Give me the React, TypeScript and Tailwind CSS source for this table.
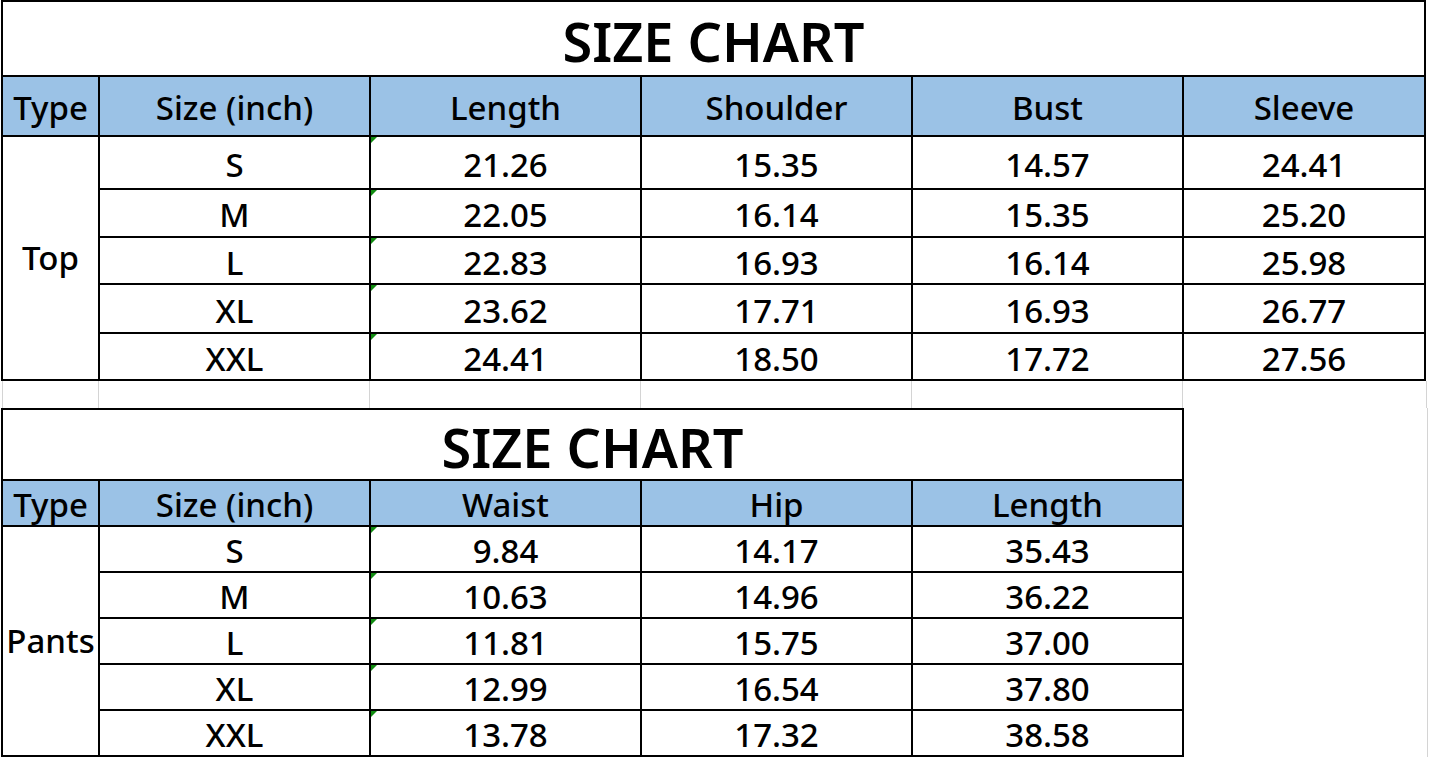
import React from "react";

const Tri = () => (
  <span className="absolute left-0 top-0 h-0 w-0 border-t-[6px] border-r-[6px] border-t-[#118c11] border-r-transparent" />
);

const cell = "flex items-center justify-center border-r-2 border-b-2 border-black";

const top = [
  ["S", "21.26", "15.35", "14.57", "24.41"],
  ["M", "22.05", "16.14", "15.35", "25.20"],
  ["L", "22.83", "16.93", "16.14", "25.98"],
  ["XL", "23.62", "17.71", "16.93", "26.77"],
  ["XXL", "24.41", "18.50", "17.72", "27.56"],
];

const pants = [
  ["S", "9.84", "14.17", "35.43"],
  ["M", "10.63", "14.96", "36.22"],
  ["L", "11.81", "15.75", "37.00"],
  ["XL", "12.99", "16.54", "37.80"],
  ["XXL", "13.78", "17.32", "38.58"],
];

export default function App() {
  return (
    <div className="h-[762px] w-[1429px] overflow-hidden bg-white font-['Noto_Sans',sans-serif] text-[33px] font-medium text-black">
      {/* Table 1 */}
      <div className="flex">
        <div className="ml-px grid w-fit grid-cols-[97px_271px_271px_271px_271px_242px] grid-rows-[75px_60px_53px_48px_47px_49px_47px] border-l-2 border-t-2 border-black">
          <div className={`${cell} col-span-6 pt-[6px] text-[54px] font-semibold`}>SIZE CHART</div>
          {["Type", "Size (inch)", "Length", "Shoulder", "Bust", "Sleeve"].map((h) => (
            <div key={h} className={`${cell} bg-[#9bc2e6] pt-[4px]`}>{h}</div>
          ))}
          <div className={`${cell} row-span-5`}>Top</div>
          {top.map((r) =>
            r.map((v, i) => (
              <div key={r[0] + i} className={`${cell} relative pt-[4px]`}>
                {i === 1 && <Tri />}
                {v}
              </div>
            ))
          )}
        </div>
      </div>

      {/* Gridline gap */}
      <div className="flex h-[27px]">
        <div className="ml-[2px] flex border-l border-[#d4d4d4]">
          {[96, 271, 271, 271, 271, 244].map((w, i) => (
            <div key={i} className="h-full border-r border-[#d4d4d4]" style={{ width: w }} />
          ))}
        </div>
      </div>

      {/* Table 2 */}
      <div className="flex">
        <div className="ml-px grid w-fit grid-cols-[97px_271px_271px_271px_271px] grid-rows-[71px_46px_46px_46px_46px_46px_46px] border-l-2 border-t-2 border-black">
          <div className={`${cell} col-span-5 pt-[6px] text-[54px] font-semibold`}>SIZE CHART</div>
          {["Type", "Size (inch)", "Waist", "Hip", "Length"].map((h) => (
            <div key={h} className={`${cell} bg-[#9bc2e6] pt-[4px]`}>{h}</div>
          ))}
          <div className={`${cell} row-span-5`}>Pants</div>
          {pants.map((r) =>
            r.map((v, i) => (
              <div key={r[0] + i} className={`${cell} relative pt-[4px]`}>
                {i === 1 && <Tri />}
                {v}
              </div>
            ))
          )}
        </div>
        <div className="ml-[243px] w-px bg-[#d4d4d4]" />
      </div>
    </div>
  );
}
